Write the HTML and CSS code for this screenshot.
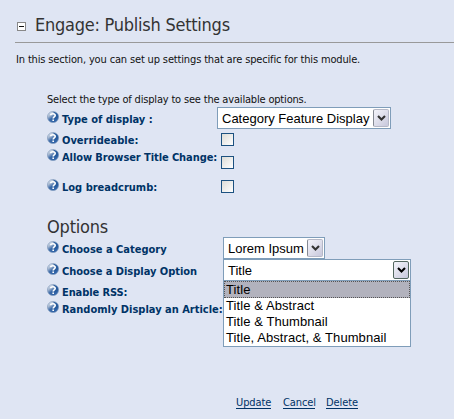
FILE: index.html
```html
<!DOCTYPE html>
<html lang="en">
<head>
<meta charset="utf-8">
<title>Engage: Publish Settings</title>
<link rel="stylesheet" href="styles.css">
</head>
<body>
<svg width="0" height="0" class="defs" aria-hidden="true">
  <defs>
    <linearGradient id="ball" x1="0" y1="0" x2="0.7" y2="1">
      <stop offset="0" stop-color="#f4f7fb"/><stop offset=".35" stop-color="#a9bad2"/><stop offset=".6" stop-color="#3c6aa8"/><stop offset="1" stop-color="#2b60a7"/>
    </linearGradient>
    <symbol id="help" viewBox="0 0 12 12">
      <circle cx="6" cy="6" r="5.6" fill="url(#ball)" stroke="#7c97bb" stroke-width=".6"/>
      <path d="M6 .8A5.2 5.2 0 0 1 11.2 6Q9.4 8.5 7.5 8.2L8.8 4Z" fill="#285b9c"/>
      <path d="M3.7 4.3C3.8 2.2 8.2 2.1 8.2 4.4C8.2 5.8 6.2 5.8 6.2 7.4M6.2 8.5V10" fill="none" stroke="#fff" stroke-width="1.6"/>
    </symbol>
    <symbol id="arrow" viewBox="0 0 9 6"><path d="M1 1L4.5 4.5L8 1" fill="none" stroke="currentColor" stroke-width="2.1"/></symbol>
  </defs>
</svg>
<main class="panel">
  <header class="heading">
    <button class="collapse" aria-label="Collapse"></button>
    <h1 class="title">Engage: Publish Settings</h1>
  </header>
  <p class="intro">In this section, you can set up settings that are specific for this module.</p>
  <section class="settings">
    <p class="hint">Select the type of display to see the available options.</p>
    <div class="row row-type"><svg class="help"><use href="#help"/></svg><span class="label l-type">Type of display :</span>
      <div class="select select-type"><span class="value">Category Feature Display</span><span class="drop"><svg><use href="#arrow"/></svg></span></div></div>
    <div class="row row-over"><svg class="help"><use href="#help"/></svg><span class="label">Overrideable:</span><span class="check"></span></div>
    <div class="row row-allow"><svg class="help"><use href="#help"/></svg><span class="label l-allow">Allow Browser Title Change:</span><span class="check"></span></div>
    <div class="row row-log"><svg class="help"><use href="#help"/></svg><span class="label">Log breadcrumb:</span><span class="check"></span></div>
    <h2 class="options-title">Options</h2>
    <div class="row row-cat"><svg class="help"><use href="#help"/></svg><span class="label">Choose a Category</span>
      <div class="select select-cat"><span class="value">Lorem Ipsum</span><span class="drop"><svg><use href="#arrow"/></svg></span></div></div>
    <div class="row row-cat"><svg class="help"><use href="#help"/></svg><span class="label l-option">Choose a Display Option</span>
      <div class="select select-option"><span class="value">Title</span><span class="drop active"><svg><use href="#arrow"/></svg></span>
        <ul class="menu"><li class="selected">Title</li><li>Title &amp; Abstract</li><li>Title &amp; Thumbnail</li><li>Title, Abstract, &amp; Thumbnail</li></ul>
      </div></div>
    <div class="row row-rss"><svg class="help"><use href="#help"/></svg><span class="label l-rss">Enable RSS:</span></div>
    <div class="row row-random"><svg class="help"><use href="#help"/></svg><span class="label">Randomly Display an Article:</span></div>
  </section>
  <nav class="actions"><a class="update">Update</a><a class="cancel">Cancel</a><a class="delete">Delete</a></nav>
</main>
</body>
</html>
```
FILE: styles.css
```css
* { box-sizing: border-box; }
body { margin: 0; background: #dfe5f3; color: #111; font-family: "DejaVu Sans Condensed", "DejaVu Sans", sans-serif; font-stretch: condensed; font-size: 11px; overflow: hidden; }
h1, h2, p, ul { margin: 0; padding: 0; font-weight: normal; }
.defs { display: block; height: 0; }
.panel { width: 454px; height: 419px; padding-top: 10px; white-space: nowrap; }
.heading { display: flex; align-items: center; height: 33px; margin-left: 15px; padding-left: 2px; border-bottom: 1px solid #999; }
.collapse { width: 9px; height: 9px; padding: 0; border: 1px solid #888; background: linear-gradient(#111, #111) center / 5px 1px no-repeat #fff; margin-top: 1px; }
.title { margin-left: 9px; font-size: 18px; line-height: 22px; color: #333; letter-spacing: -.25px; margin-top: -3px; }
.intro { height: 16px; line-height: 16px; margin: 9px 0 0 16px; letter-spacing: -.15px; }
.settings { margin-left: 47px; }
.hint { height: 16px; line-height: 16px; margin-top: 24px; letter-spacing: -.18px; }
.row { display: grid; grid-template-columns: 15px 159px auto; justify-content: start; align-items: start; }
.help { width: 12px; height: 12px; margin-top: 3px; }
.label { font-weight: bold; line-height: 14px; margin-top: 3px; color: #003366; letter-spacing: 0; }
.row-type { height: 24px; grid-template-columns: 15px 155px auto; margin-top: -1px; }
.row-type .label { margin-top: 6px; }
.row-type .help { margin-top: 4px; }
.l-allow { letter-spacing: -.08px; }
.l-option { letter-spacing: -.03px; }
.l-rss { letter-spacing: -.1px; }
.row-over { height: 17px; }
.row-allow { height: 30px; }
.row-log { height: 38px; }
.row-over .help, .row-allow .help, .row-log .help { margin-top: 1px; }
.check { width: 13px; height: 13px; margin-top: 2px; border: 1px solid #1c5180; background: linear-gradient(135deg, #dcdcd7, #fff); }
.row-allow .check { margin-top: 8px; }
.options-title { height: 21px; line-height: 22px; font-size: 18px; letter-spacing: -.2px; color: #333; }
.row-cat { height: 22px; grid-template-columns: 15px 161px auto; }
.row-cat .help { margin-top: 4px; }
.row-cat .label { margin-top: 6px; }
.row-rss { height: 17px; }
.row-rss .label { margin-top: 5px; }
.row-random { height: 22px; }
.row-random .label { margin-top: 5px; }
.select { position: relative; display: flex; justify-content: space-between; height: 22px; border: 1px solid #7f9db9; background: #fff; color: #000; font: 13px/20px "Liberation Sans", Arial, sans-serif; padding: 1px 1px 1px 4px; }
.value { line-height: 19px; }
.select-type { width: 174px; }
.select-cat { width: 102px; }
.select-option { width: 188px; }
.drop { display: flex; align-items: center; justify-content: center; width: 16px; height: 18px; border: 1px solid #b5b8c7; border-left-color: #858993; border-radius: 2px; background: linear-gradient(135deg, #f4f4fa, #c8c8dc); color: #333; }
.drop svg { width: 9px; height: 6px; }
.active { color: #000; border-color: #53675f; }
.menu { position: absolute; z-index: 2; left: -1px; top: 20px; width: 188px; height: 67px; border: 1px solid #7f9db9; background: #fff; list-style: none; }
.menu li { height: 16px; line-height: 16px; padding-left: 2px; letter-spacing: .08px; }
.menu .selected { height: 17px; line-height: 17px; background: #b2b2bd; outline: 1px dotted #555; outline-offset: -1px; }
.actions { display: flex; margin: 75px 0 0 236px; color: #003366; }
.actions a { line-height: 15px; height: 14px; border-bottom: 1px solid #003366; letter-spacing: -.1px; }
.update { width: 35px; margin-right: 12px; }
.cancel { width: 32px; margin-right: 11px; }
.delete { width: 32px; }
```
